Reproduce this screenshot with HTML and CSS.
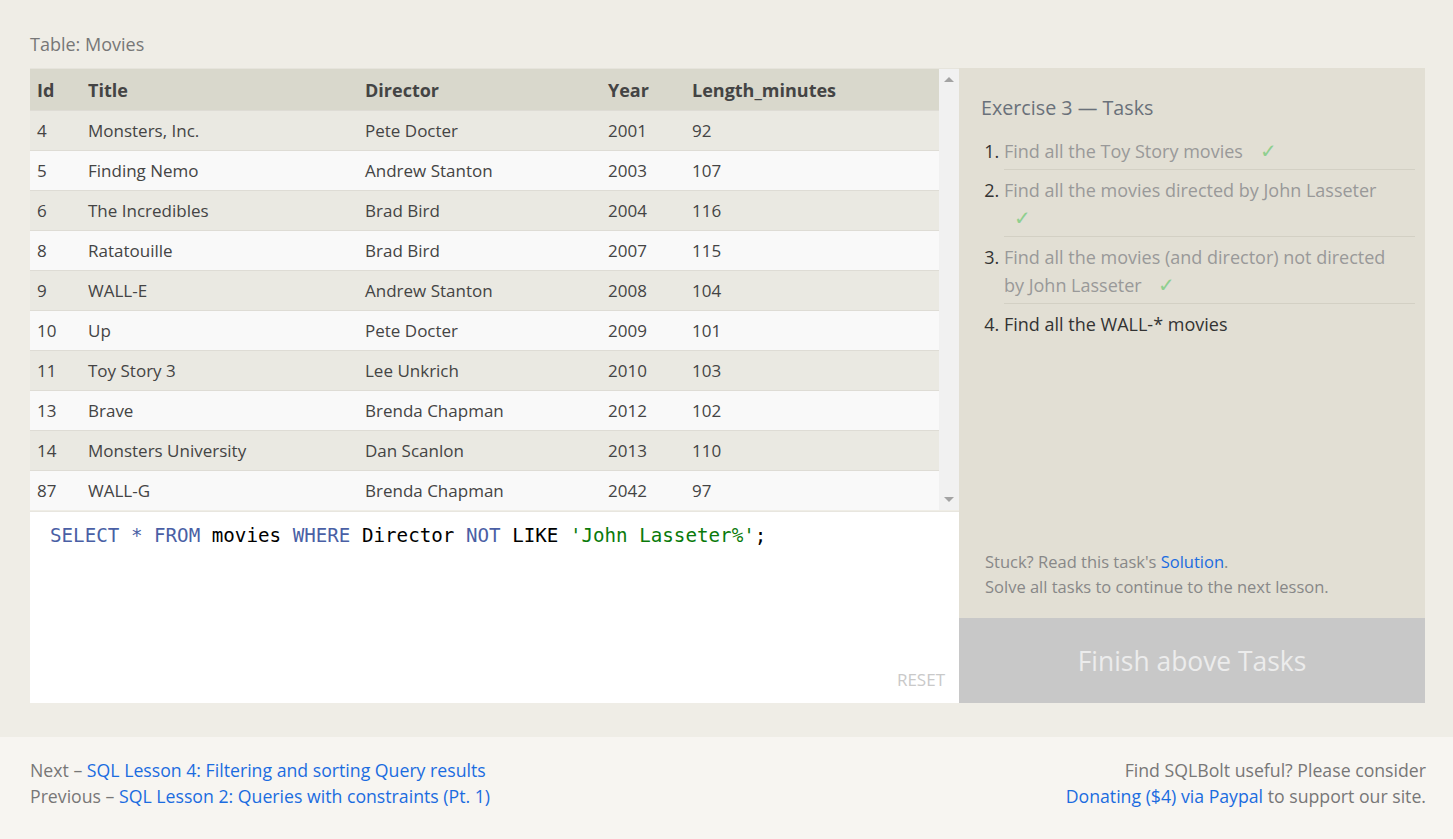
FILE: index.html
```html
<!DOCTYPE html>
<html>
<head>
<meta charset="utf-8">
<link rel="stylesheet" href="styles.css">
</head>
<body>
<div class="page">
  <div class="caption">Table: Movies</div>
  <div class="main">
    <div class="left">
      <div class="results">
        <table class="tbl">
          <colgroup>
            <col class="c-id"><col class="c-title"><col class="c-dir"><col class="c-year"><col>
          </colgroup>
          <thead>
            <tr><th>Id</th><th>Title</th><th>Director</th><th>Year</th><th>Length_minutes</th></tr>
          </thead>
          <tbody>
            <tr><td>4</td><td>Monsters, Inc.</td><td>Pete Docter</td><td>2001</td><td>92</td></tr>
            <tr><td>5</td><td>Finding Nemo</td><td>Andrew Stanton</td><td>2003</td><td>107</td></tr>
            <tr><td>6</td><td>The Incredibles</td><td>Brad Bird</td><td>2004</td><td>116</td></tr>
            <tr><td>8</td><td>Ratatouille</td><td>Brad Bird</td><td>2007</td><td>115</td></tr>
            <tr><td>9</td><td>WALL-E</td><td>Andrew Stanton</td><td>2008</td><td>104</td></tr>
            <tr><td>10</td><td>Up</td><td>Pete Docter</td><td>2009</td><td>101</td></tr>
            <tr><td>11</td><td>Toy Story 3</td><td>Lee Unkrich</td><td>2010</td><td>103</td></tr>
            <tr><td>13</td><td>Brave</td><td>Brenda Chapman</td><td>2012</td><td>102</td></tr>
            <tr><td>14</td><td>Monsters University</td><td>Dan Scanlon</td><td>2013</td><td>110</td></tr>
            <tr><td>87</td><td>WALL-G</td><td>Brenda Chapman</td><td>2042</td><td>97</td></tr>
          </tbody>
        </table>
        <div class="scrollbar">
          <span class="arrow up"></span>
          <span class="arrow down"></span>
        </div>
      </div>
      <div class="editor">
        <div class="code"><span class="kw">SELECT</span> <span class="kw">*</span> <span class="kw">FROM</span> movies <span class="kw">WHERE</span> Director <span class="kw">NOT</span> LIKE <span class="str">'John Lasseter%'</span>;</div>
        <div class="reset">RESET</div>
      </div>
    </div>
    <div class="right">
      <div class="tasks">
        <h3 class="ex-title">Exercise 3 — Tasks</h3>
        <ol class="task-list">
          <li class="done">Find all the Toy Story movies <span class="check">✓</span></li>
          <li class="done">Find all the movies directed by John Lasseter <span class="check own-line">✓</span></li>
          <li class="done">Find all the movies (and director) not directed by&nbsp;John Lasseter <span class="check">✓</span></li>
          <li class="todo">Find all the WALL-* movies</li>
        </ol>
        <div class="stuck">
          <div>Stuck? Read this task's <a class="link" href="#">Solution</a>.</div>
          <div>Solve all tasks to continue to the next lesson.</div>
        </div>
      </div>
      <div class="finish">Finish above Tasks</div>
    </div>
  </div>
</div>
<div class="footer">
  <div class="nav">
    <div>Next – <a class="link" href="#">SQL Lesson 4: Filtering and sorting Query results</a></div>
    <div>Previous – <a class="link" href="#">SQL Lesson 2: Queries with constraints (Pt. 1)</a></div>
  </div>
  <div class="donate">
    <div>Find SQLBolt useful? Please consider</div>
    <div><a class="link" href="#">Donating ($4) via Paypal</a> to support our site.</div>
  </div>
</div>
</body>
</html>
```
FILE: styles.css
```css
html, body {
  margin: 0;
  padding: 0;
}
body {
  background: #efede6;
  font-family: "Open Sans", "Noto Sans", sans-serif;
  color: #555;
  width: 1453px;
  height: 839px;
  overflow: hidden;
}
.page {
  padding: 30px 28px 34px 30px;
}
.caption {
  font-size: 18px;
  color: #777;
  line-height: 28px;
  margin-bottom: 10px;
}
.main {
  display: flex;
  width: 1395px;
}
.left {
  width: 929px;
  display: flex;
  flex-direction: column;
}
.results {
  display: flex;
  height: 442px;
  border-top: 1px solid #e6e4dc;
  box-sizing: border-box;
}
.tbl {
  width: 909px;
  border-collapse: collapse;
  table-layout: fixed;
  font-size: 17px;
  color: #444;
}
.c-id { width: 51px; }
.c-title { width: 277px; }
.c-dir { width: 243px; }
.c-year { width: 84px; }
.tbl th {
  background: #d9d8cc;
  text-align: left;
  font-weight: 700;
  height: 41px;
  padding: 0 0 0 7px;
  color: #444;
  font-size: 18px;
}
.tbl td {
  height: 39px;
  padding: 0 0 0 7px;
  border-top: 1px solid #dedcd5;
  white-space: nowrap;
}
.tbl tbody tr:nth-child(odd) td { background: #eae9e2; }
.tbl tbody tr:nth-child(even) td { background: #f9f9f9; }
.scrollbar {
  width: 20px;
  background: #f1f1f1;
  display: flex;
  flex-direction: column;
  justify-content: space-between;
  align-items: center;
  padding: 8px 0 8px;
}
.arrow {
  width: 0;
  height: 0;
  border-left: 5px solid transparent;
  border-right: 5px solid transparent;
}
.arrow.up { border-bottom: 5px solid #a3a3a3; }
.arrow.down { border-top: 5px solid #a3a3a3; }
.editor {
  background: #fff;
  height: 192px;
  margin-top: 1px;
  display: flex;
  flex-direction: column;
  justify-content: space-between;
  box-sizing: border-box;
  padding: 12px 14px 12px 20px;
  border-top: 1px solid #e8e6df;
}
.code {
  font-family: "DejaVu Sans Mono", "Liberation Mono", monospace;
  font-size: 19.2px;
  line-height: 24px;
  color: #000;
  white-space: pre;
}
.kw { color: #4a5fa5; }
.str { color: #0a7a0a; }
.reset {
  align-self: flex-end;
  font-size: 17px;
  color: #c9c9c9;
  text-transform: uppercase;
}
.right {
  width: 466px;
  display: flex;
  flex-direction: column;
  background: #e2dfd4;
}
.tasks {
  flex: 1;
  padding: 26px 10px 19px 22px;
  display: flex;
  flex-direction: column;
}
.ex-title {
  margin: 0 0 9px 0;
  font-weight: 400;
  font-size: 19.7px;
  color: #6a717a;
  line-height: 28px;
}
.task-list {
  margin: 0;
  padding: 0 0 0 23px;
  font-size: 18px;
  line-height: 28px;
  flex: 1;
}
.task-list li {
  padding: 6px 0 4px 0;
  border-bottom: 1px solid #d3d0c4;
  color: #333;
}
.task-list li:last-child { border-bottom: none; }
.task-list li.done { color: #999; }
.task-list li::marker { color: #333; }
.check {
  display: inline-block;
  color: #8fcf8f;
  margin-left: 12px;
  font-size: 20px;
  line-height: 1;
}
.check.own-line {
  display: block;
  margin-left: 10px;
  line-height: 28px;
}
.stuck {
  font-size: 16.5px;
  color: #888;
  line-height: 25px;
  padding-left: 4px;
}
.link {
  color: #1b6ce0;
  text-decoration: none;
}
.finish {
  height: 85px;
  background: #c8c8c8;
  color: #ececec;
  font-size: 26.4px;
  display: flex;
  align-items: center;
  justify-content: center;
}
.footer {
  background: #f7f5f1;
  height: 102px;
  box-sizing: border-box;
  padding: 20px 27px 0 30px;
  display: flex;
  justify-content: space-between;
  font-size: 17.7px;
  line-height: 26px;
  color: #777;
}
.donate { text-align: right; }
```
